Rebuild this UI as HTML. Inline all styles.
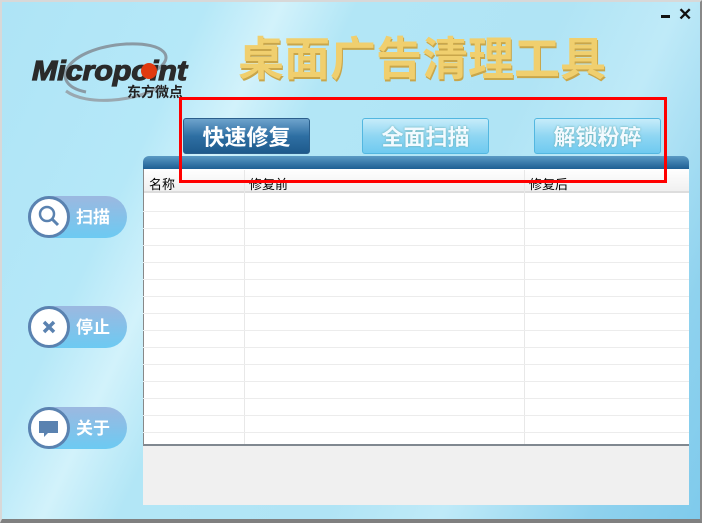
<!DOCTYPE html>
<html><head><meta charset="utf-8"><style>
*{margin:0;padding:0;box-sizing:border-box}
body{width:702px;height:523px;overflow:hidden;font-family:"Liberation Sans","Noto Sans CJK SC",sans-serif;background:#fff}
#win{position:absolute;left:0;top:0;width:702px;height:523px;
background:linear-gradient(115deg,#aee4f6 0%,#b5e8f8 22%,#d2f2fb 30%,#b2e6f6 38%,#b0e4f5 60%,#bfeaf8 72%,#8fd2ee 88%,#7ecaec 100%)}
#bd{position:absolute;left:0;top:0;width:702px;height:523px;border:2px solid #d8d8d8;border-right-color:#888;border-bottom:4px solid #808080}
.abs{position:absolute}
.title{left:238px;top:26px;font-size:46px;font-weight:bold;color:#f0cf6e;text-shadow:1px 2px 0 #c9a64a;font-family:"Noto Sans CJK SC",sans-serif;line-height:60px;white-space:nowrap}
.btn{height:36px;width:127px;border-radius:3px;font-size:22px;font-weight:bold;text-align:center;line-height:34px;font-family:"Noto Sans CJK SC",sans-serif}
.b1{background:linear-gradient(#6ea3cc,#2e6fa3 50%,#1e5a8c);color:#fff;border:1px solid #2b5f8c}
.b2{background:linear-gradient(#c6ecfa,#8fd6f2 50%,#6fcaf0);color:#f2faff;border:1px solid #53b7e0;text-shadow:0 0 2px #6aa}
.pill{left:28px;width:99px;height:42px;border-radius:21px;background:linear-gradient(#9cb8e0,#6ccaf2);}
.pill .c{position:absolute;left:0;top:0;width:42px;height:42px;border-radius:50%;background:#fff;border:3px solid #5a82b0}
.pill .t{position:absolute;left:48px;top:9px;color:#fff;font-size:17px;font-weight:bold;font-family:"Noto Sans CJK SC",sans-serif;line-height:22px}
.hl{position:absolute;left:143px;width:546px;height:1px;background:#ececec}
</style></head><body><div id="win">
<div class="abs" style="left:661px;top:15px;width:9px;height:3px;background:#111"></div>
<div class="abs" style="left:678px;top:5px;font-size:17px;font-weight:bold;color:#111">✕</div>
<svg class="abs" style="left:26px;top:36px" width="170" height="70">
<path d="M60 56 C20 48 40 12 100 8 C140 6 150 22 130 34" fill="none" stroke="#8a9aa4" stroke-width="3"/>
<path d="M40 55 C60 70 110 66 135 50" fill="none" stroke="#9aa8b0" stroke-width="3"/>
<text x="6" y="44" font-family="Liberation Sans" font-style="italic" font-weight="bold" font-size="28" fill="#2a2a2a" stroke="#2a2a2a" stroke-width="1.2" textLength="155" lengthAdjust="spacingAndGlyphs">Micropoint</text>
<circle cx="123" cy="35" r="8" fill="#e03a10"/>
<text x="101" y="61" font-family="Noto Sans CJK SC" font-weight="bold" font-size="14" fill="#222">东方微点</text>
</svg>
<div class="abs title">桌面广告清理工具</div>
<div class="abs btn b1" style="left:183px;top:118px">快速修复</div>
<div class="abs btn b2" style="left:362px;top:118px">全面扫描</div>
<div class="abs btn b2" style="left:534px;top:118px">解锁粉碎</div>
<div class="abs" style="left:143px;top:156px;width:546px;height:13px;border-radius:6px 6px 0 0;background:linear-gradient(#5b9ac4,#1e5f93)"></div>
<div class="abs" style="left:143px;top:169px;width:546px;height:277px;background:#fff;border-left:1px solid #888;border-bottom:2px solid #808890"></div>
<div class="abs" style="left:144px;top:169px;width:545px;height:24px;background:linear-gradient(#fff,#f0f0f0);border-bottom:2px solid #ddd"></div>
<div class="abs" style="left:149px;top:174px;font-size:13px;color:#000">名称</div>
<div class="abs" style="left:249px;top:174px;font-size:13px;color:#000">修复前</div>
<div class="abs" style="left:529px;top:174px;font-size:13px;color:#000">修复后</div>
<div class="abs" style="left:244px;top:170px;width:1px;height:274px;background:#e8e8e8"></div>
<div class="abs" style="left:524px;top:170px;width:1px;height:274px;background:#e8e8e8"></div>
<div class="hl" style="top:211px"></div><div class="hl" style="top:228px"></div><div class="hl" style="top:245px"></div><div class="hl" style="top:262px"></div><div class="hl" style="top:279px"></div><div class="hl" style="top:296px"></div><div class="hl" style="top:313px"></div><div class="hl" style="top:330px"></div><div class="hl" style="top:347px"></div><div class="hl" style="top:364px"></div><div class="hl" style="top:381px"></div><div class="hl" style="top:398px"></div><div class="hl" style="top:415px"></div><div class="hl" style="top:432px"></div>
<div class="abs" style="left:143px;top:446px;width:546px;height:59px;background:#f0f0f0"></div>
<div class="abs" style="left:179px;top:97px;width:488px;height:86px;border:3px solid #f00"></div>
<div class="abs pill" style="top:196px"><div class="c"><svg width="36" height="36"><circle cx="16" cy="15" r="7" fill="none" stroke="#5a82b0" stroke-width="2.5"/><path d="M21 20 L27 26" stroke="#5a82b0" stroke-width="3"/></svg></div><div class="t">扫描</div></div>
<div class="abs pill" style="top:306px"><div class="c"><svg width="36" height="36"><path d="M13 13 L23 23 M23 13 L13 23" stroke="#5a82b0" stroke-width="3.5"/></svg></div><div class="t">停止</div></div>
<div class="abs pill" style="top:407px"><div class="c"><svg width="36" height="36"><rect x="8" y="11" width="19" height="12" fill="#5a82b0"/><path d="M13 23 L13 27 L17 23Z" fill="#5a82b0"/></svg></div><div class="t">关于</div></div>
<div id="bd"></div>
</div></body></html>
